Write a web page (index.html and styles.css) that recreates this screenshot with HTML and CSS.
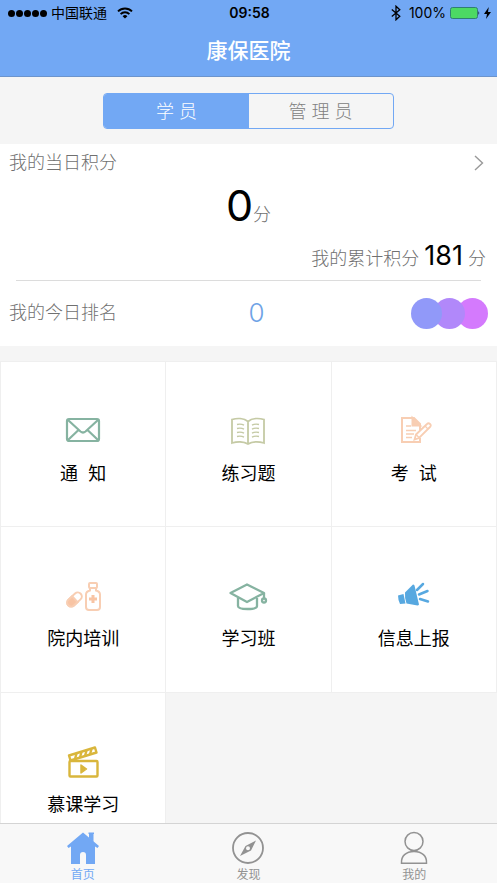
FILE: index.html
```html
<!DOCTYPE html>
<html lang="zh-CN">
<head>
<meta charset="utf-8">
<meta name="viewport" content="width=device-width, initial-scale=1">
<title>康保医院</title>
<link rel="stylesheet" href="styles.css">
</head>
<body>
<header class="header">
  <div class="status">
    <div class="status-left">
      <span class="signal"><i></i><i></i><i></i><i></i><i></i></span>
      <span>中国联通</span>
      <svg class="wifi" width="16" height="12" viewBox="0 0 16 12" fill="none" stroke="#000" stroke-width="1.9"><path d="M1 4.4a10 10 0 0 1 14 0M3.6 7.1a6.2 6.2 0 0 1 8.8 0"/><path d="M8 11.6 5.6 9.2a3.4 3.4 0 0 1 4.8 0z" fill="#000" stroke="none"/></svg>
    </div>
    <time class="clock">09:58</time>
    <div class="status-right">
      <svg width="10" height="16" viewBox="0 0 10 16" fill="none" stroke="#000" stroke-width="1.3"><path d="M.8 4.5 8.8 11.3 5 14.8V1.2l3.8 3.5L.8 11.5"/></svg>
      <span class="percent">100%</span>
      <svg width="30" height="12" viewBox="0 0 30 12"><rect x=".5" y=".5" width="27" height="11" rx="2" fill="#4cd964" stroke="#2f7f72"/><path d="M28.5 4q1.5 2 0 4z" fill="#000"/></svg>
      <svg width="7" height="12" viewBox="0 0 7 12"><path d="M4.8 0 0 7h3L2 12l5-7H4z"/></svg>
    </div>
  </div>
  <h1 class="title">康保医院</h1>
</header>

<main class="main">
  <div class="segment">
    <button class="segment-item is-on" type="button">学 员</button>
    <button class="segment-item" type="button">管 理 员</button>
  </div>

  <section class="card">
    <a class="card-head" href="#points">
      <span>我的当日积分</span>
      <svg width="10" height="16" viewBox="0 0 10 16" fill="none" stroke="#999" stroke-width="1.4"><path d="m1 1 7.500 7L1 15"/></svg>
    </a>
    <p class="today"><strong>0</strong>分</p>
    <p class="total">我的累计积分 <strong>181</strong> 分</p>
    <div class="rank">
      <span>我的今日排名</span>
      <div class="rank-side">
        <span class="rank-value">0</span>
        <span class="dots"><i class="dot blue"></i><i class="dot violet"></i><i class="dot pink"></i></span>
      </div>
    </div>
  </section>

  <nav class="grid">
    <a class="cell" href="#notice">
      <svg class="icon" viewBox="0 0 36 36" fill="none" stroke="#86b3a1" stroke-width="2.2"><rect x="2" y="7" width="32" height="22" rx="2"/><path d="m3 8 12.500 11.500q2.500 2 5 0L33 8M3 28l10.500-10M33 28 22.500 18"/></svg>
      <span>通  知</span>
    </a>
    <a class="cell" href="#practice">
      <svg class="icon" viewBox="0 0 36 36" fill="none" stroke="#c5caa5" stroke-width="1.8"><path d="M18 9.500C14 6 7 6 2 7.500V31c5-1.500 12-1.500 16 1 4-2.500 11-2.500 16-1V7.500C29 6 22 6 18 9.500zM18 9.500V32"/><path stroke-width="1.4" d="M7 12.500q4-1 7 .7M7 16.500q4-1 7 .7M7 20.500q4-1 7 .7M7 24.500q4-1 7 .7M29 12.500q-4-1-7 .7M29 16.500q-4-1-7 .7M29 20.500q-4-1-7 .7M29 24.500q-4-1-7 .7"/></svg>
      <span>练习题</span>
    </a>
    <a class="cell" href="#exam">
      <svg class="icon" viewBox="-1 0 36 36" fill="none" stroke="#f8ceb3" stroke-width="2"><path d="M23 18v-6l-6-6H5v24h18v-4"/><path d="M15.500 6v7.500H23z" fill="#f8ceb3"/><path d="M9 14h5M9 18.500h10M9 22h8M9 25.500h6" stroke-width="1.5"/><path d="m19 22.500 11-10.500q1.500-1.500 3 0t0 3L22 26l-4.500 1.500z" fill="#fff" stroke-width="1.8"/><path d="m28 14 3 3M19 22.500l3 3" stroke-width="1.3"/></svg>
      <span>考  试</span>
    </a>
    <a class="cell" href="#training">
      <svg class="icon" viewBox="0 -1 36 36" fill="none" stroke="#f8ceb3" stroke-width="2"><g transform="rotate(-43 9.500 21.500)"><rect x="1" y="17.500" width="17" height="8" rx="4"/><path d="M10 17.500H5a4 4 0 0 0 0 8h5z" fill="#f8c4a4"/></g><rect x="24" y="5" width="8" height="5" rx="1"/><path d="M25 10v2.500q-4 1-4 4V29q0 3 3 3h8q3 0 3-3V16.500q0-3-4-4V10"/><path d="M28 17v8M24 21h8" stroke="#f8c4a4" stroke-width="3"/></svg>
      <span>院内培训</span>
    </a>
    <a class="cell" href="#classes">
      <svg class="icon wide" viewBox="0 -2 40 36" fill="none" stroke="#86b3a1" stroke-width="2.3"><path d="M19 5.500 2.500 14 19 23l17-9z" stroke-linejoin="round"/><path d="M10 19v8q0 3 9.500 3t9.500-3v-8M36 14v5"/><circle cx="36" cy="21.500" r="2"/></svg>
      <span>学习班</span>
    </a>
    <a class="cell" href="#report">
      <svg class="icon" viewBox="0 -2 36 36" fill="#57a8e0"><path d="m2 16.500 5.500-1.500 2 9.500-5.500.500q-2-4-2-8.500zM9 13.500 17 5.500q1 0 1.500 1L23 25.500q-.5 1-1.500 1L10.500 24.500q-2-5-1.500-11z"/><path d="M21 11 27 5M23 15.500l8.500-3.500M24 20l8 2.500" fill="none" stroke="#57a8e0" stroke-width="2.500" stroke-linecap="round"/></svg>
      <span>信息上报</span>
    </a>
    <a class="cell" href="#mooc">
      <svg class="icon" viewBox="0 -1 36 36" fill="none" stroke="#d9b63c" stroke-width="2.400" stroke-linejoin="round"><rect x="4.500" y="17" width="28" height="15.500" rx="1"/><path d="M4 11.500 30 3.500l1.500 5L5.500 16.500z"/><path d="m10 15 1.500-5.500M15 13.500 16.500 8M20 12l1.500-5.500M25 10.500 26.500 5"/><path d="M16 21v8l5.500-4z" fill="#d9b63c" stroke-width="1.500"/></svg>
      <span>慕课学习</span>
    </a>
  </nav>
</main>

<nav class="tabs">
  <a class="tab is-on" href="#home">
    <svg width="34" height="34" viewBox="0 0 34 34" fill="#72a8f4"><path d="M17 1.500 33 15l-1.500 2L29 15.500V33h-9V24q0-3-3-3t-3 3v9H5V15.500L2.500 17 1 15z"/><path d="M22.500 1.500H28V3h-.500v8L23 7V3h-.500z"/></svg>
    <span>首页</span>
  </a>
  <a class="tab" href="#discover">
    <svg width="34" height="34" viewBox="0 0 34 34" fill="none" stroke="#929292"><circle cx="17" cy="17" r="15" stroke-width="1.8"/><path fill="#929292" stroke="none" fill-rule="evenodd" d="M25 9.500 20 19.500 9 25l5.500-10zM17 15.300a2 2 0 1 0 0 4 2 2 0 0 0 0-4z"/></svg>
    <span>发现</span>
  </a>
  <a class="tab" href="#me">
    <svg width="34" height="34" viewBox="0 0 34 34" fill="none" stroke="#929292" stroke-width="1.5"><circle cx="17" cy="10.500" r="9"/><path d="M4.500 32.200C4 25 9 20.500 17 20.500S30 25 29.500 32.200z"/></svg>
    <span>我的</span>
  </a>
</nav>
</body>
</html>
```
FILE: styles.css
```css
* {
  box-sizing: border-box;
}

body {
  margin: 0;
  height: 100vh;
  display: flex;
  flex-direction: column;
  background: #f5f5f5;
  color: #000;
  font: 18px/24px Inter, "Noto Sans CJK SC", sans-serif;
}

a {
  color: inherit;
  text-decoration: none;
}

p,
h1 {
  margin: 0;
}

svg {
  display: block;
  flex: none;
}

.header {
  background: #72a8f4;
  border-bottom: 1px solid #6c94cc;
}

.status {
  display: grid;
  grid-template-columns: 1fr auto 1fr;
  align-items: center;
  height: 26px;
  padding: 0 6px 0 8px;
  font-size: 14px;
}

.status-left,
.status-right {
  display: flex;
  align-items: center;
  gap: 4px;
}

.status-right {
  justify-content: flex-end;
}

.signal {
  display: flex;
  gap: 1px;
}

.signal i {
  width: 7px;
  height: 7px;
  border-radius: 50%;
  background: #000;
}

.wifi {
  margin-left: 6px;
}

.clock {
  font-weight: 600;
}

.percent {
  margin-left: 4px;
}

.title {
  height: 50px;
  color: #fff;
  font-size: 21px;
  font-weight: 500;
  line-height: 50px;
  text-align: center;
}

.main {
  flex: 1;
  min-height: 0;
  overflow-y: auto;
  scrollbar-width: none;
}

.segment {
  display: flex;
  width: 58.4%;
  height: 36px;
  margin: 16px auto 15px;
  border: 1px solid #72a8f4;
  border-radius: 4px;
  overflow: hidden;
}

.segment-item {
  flex: 1;
  padding: 2px 0 0;
  border: 0;
  background: none;
  color: #808080;
  font: inherit;
  font-weight: 300;
}

.segment-item.is-on {
  background: #72a8f4;
  color: #fff;
}

.card {
  background: #fff;
  color: #707070;
  font-weight: 300;
}

.card-head {
  display: flex;
  align-items: center;
  justify-content: space-between;
  height: 38px;
  padding: 0 13px 0 9px;
}

.card strong {
  color: #000;
  font-weight: 400;
}

.today {
  height: 50px;
  line-height: 46px;
  text-align: center;
}

.today strong {
  font-size: 43px;
}

.total {
  height: 48px;
  padding: 0 11px;
  line-height: 48px;
  text-align: right;
}

.total strong {
  font-size: 27px;
}

.rank {
  position: relative;
  display: grid;
  grid-template-columns: 1fr 1fr;
  align-items: center;
  height: 66px;
  padding: 0 9px;
}

.rank::before {
  content: "";
  position: absolute;
  top: 0;
  left: 16px;
  right: 16px;
  border-top: 1px solid #dcdcdc;
}

.rank-side {
  display: flex;
  align-items: center;
  justify-content: space-between;
}

.rank-value {
  color: #6fa3e6;
  font-size: 26px;
}

.dots {
  display: flex;
}

.dot {
  position: relative;
  width: 31px;
  height: 31px;
  border-radius: 50%;
}

.dot + .dot {
  margin-left: -8px;
}

.blue {
  z-index: 3;
  background: #9199f9;
}

.violet {
  z-index: 2;
  background: #b188fa;
}

.pink {
  z-index: 1;
  background: #d47afd;
}

.grid {
  display: grid;
  grid-template-columns: repeat(3, 1fr);
  margin-top: 15px;
  border-top: 1px solid #efefef;
  border-left: 1px solid #efefef;
}

.cell {
  display: flex;
  flex-direction: column;
  align-items: center;
  gap: 14px;
  aspect-ratio: 1;
  padding-top: 50px;
  border-right: 1px solid #efefef;
  border-bottom: 1px solid #efefef;
  background: #fff;
  white-space: pre;
}

.icon {
  width: 36px;
  height: 36px;
}

.icon.wide {
  width: 40px;
}

.tabs {
  display: grid;
  grid-template-columns: repeat(3, 1fr);
  height: 60px;
  border-top: 1px solid #d4d4d4;
  background: #f8f8f8;
  color: #929292;
  font-size: 12px;
  line-height: 20px;
}

.tab {
  display: flex;
  flex-direction: column;
  align-items: center;
  padding-top: 7px;
}

.tab.is-on {
  color: #72a8f4;
}
```
